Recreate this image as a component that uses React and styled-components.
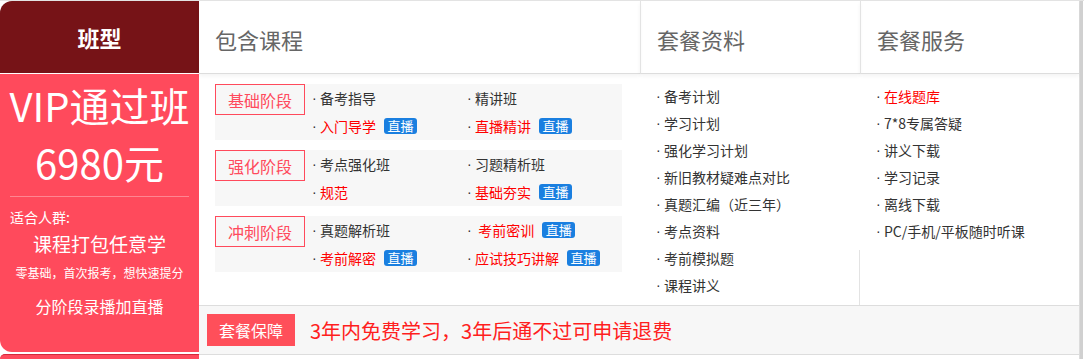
import React from "react";
import styled, { createGlobalStyle } from "styled-components";

const Global = createGlobalStyle`
  body {
    margin: 0;
    background: #fff;
    font-family: "Noto Sans CJK SC", "Microsoft YaHei", sans-serif;
  }
`;

const stages = [
  {
    name: "基础阶段",
    items: [
      { text: "备考指导" },
      { text: "精讲班" },
      { text: "入门导学", red: true, live: true },
      { text: "直播精讲", red: true, live: true },
    ],
  },
  {
    name: "强化阶段",
    items: [
      { text: "考点强化班" },
      { text: "习题精析班" },
      { text: "规范", red: true },
      { text: "基础夯实", red: true, live: true },
    ],
  },
  {
    name: "冲刺阶段",
    items: [
      { text: "真题解析班" },
      { text: " 考前密训", red: true, live: true },
      { text: "考前解密", red: true, live: true },
      { text: "应试技巧讲解", red: true, live: true },
    ],
  },
];

const materials = [
  "备考计划",
  "学习计划",
  "强化学习计划",
  "新旧教材疑难点对比",
  "真题汇编（近三年）",
  "考点资料",
  "考前模拟题",
  "课程讲义",
];

const services = [
  { text: "在线题库", red: true },
  { text: "7*8专属答疑" },
  { text: "讲义下载" },
  { text: "学习记录" },
  { text: "离线下载" },
  { text: "PC/手机/平板随时听课" },
];

export default function App() {
  return (
    <Page>
      <Global />
      <LeftCol>
        <LeftHead>班型</LeftHead>
        <LeftBody>
          <Title>VIP通过班</Title>
          <Title>6980元</Title>
          <Rule />
          <Label>适合人群:</Label>
          <Slogan>课程打包任意学</Slogan>
          <Small>零基础，首次报考，想快速提分</Small>
          <Mode>分阶段录播加直播</Mode>
        </LeftBody>
        <NextRow />
      </LeftCol>
      <Main>
        <HeadCell>包含课程</HeadCell>
        <HeadCell divided>套餐资料</HeadCell>
        <HeadCell divided>套餐服务</HeadCell>

        <Stages>
          {stages.map((s) => (
            <StageBlock key={s.name}>
              <StageTag>{s.name}</StageTag>
              <Items>
                {s.items.map((it) => (
                  <Item key={it.text} red={it.red}>
                    <Dot>·</Dot>
                    {it.text}
                    {it.live && <Live>直播</Live>}
                  </Item>
                ))}
              </Items>
            </StageBlock>
          ))}
        </Stages>

        <ListCol split>
          {materials.map((m) => (
            <ListItem key={m}>
              <Dot>·</Dot>
              {m}
            </ListItem>
          ))}
        </ListCol>
        <ListCol>
          {services.map((s) => (
            <ListItem key={s.text} red={s.red}>
              <Dot>·</Dot>
              {s.text}
            </ListItem>
          ))}
        </ListCol>

        <Footer>
          <Guarantee>套餐保障</Guarantee>
          <Promise>3年内免费学习，3年后通不过可申请退费</Promise>
        </Footer>
      </Main>
      <Edge />
    </Page>
  );
}

const Page = styled.div`
  display: flex;
  width: 1084px;
  height: 359px;
  border-top: 1px solid #e3e3e3;
  box-sizing: border-box;
  overflow: hidden;
`;

const LeftCol = styled.div`
  width: 199px;
  flex: none;
  display: flex;
  flex-direction: column;
`;

const LeftHead = styled.div`
  height: 72px;
  background: #761317;
  border-top-left-radius: 12px;
  color: #fff;
  font-size: 22px;
  font-weight: bold;
  display: flex;
  align-items: center;
  justify-content: center;
`;

const LeftBody = styled.div`
  margin-top: 1px;
  height: 278px;
  background: #ff4a5c;
  border-bottom-left-radius: 12px;
  padding: 3px 10px 0;
  box-sizing: border-box;
  color: #fff;
  display: flex;
  flex-direction: column;
  align-items: center;
`;

const Title = styled.div`
  font-size: 40px;
  line-height: 57px;
  white-space: nowrap;
`;

const Rule = styled.div`
  align-self: stretch;
  height: 1px;
  margin-top: 5px;
  background: #ff8591;
`;

const Label = styled.div`
  align-self: flex-start;
  margin-top: 10px;
  font-size: 14px;
  line-height: 20px;
`;

const Slogan = styled.div`
  margin-top: 2px;
  font-size: 19px;
  line-height: 30px;
`;

const Small = styled.div`
  margin-top: 4px;
  font-size: 12px;
  line-height: 20px;
  white-space: nowrap;
`;

const Mode = styled.div`
  margin-top: 11px;
  font-size: 16px;
  line-height: 24px;
`;

const NextRow = styled.div`
  flex: 1;
  margin-top: 2px;
  background: #ff4a5c;
  border-top: 1px solid #d42a3b;
  border-top-left-radius: 10px;
`;

const Main = styled.div`
  width: 881px;
  flex: none;
  display: grid;
  grid-template-columns: 441px 220px 1fr;
  grid-template-rows: 73px 231px 50px;
  border-right: 1px solid #dcdcdc;
  box-sizing: border-box;
`;

const HeadCell = styled.div`
  display: flex;
  align-items: center;
  padding: 4px 0 0 16px;
  font-size: 22px;
  color: #666;
  border-bottom: 1px solid #ddd;
  border-left: ${(p) => (p.divided ? "1px solid #e3e3e3" : "none")};
  box-shadow: 0 2px 4px rgba(0, 0, 0, 0.05);
`;

const Stages = styled.div`
  padding: 10px 18px 0 16px;
  display: flex;
  flex-direction: column;
  gap: 10px;
`;

const StageBlock = styled.div`
  display: flex;
  height: 56px;
  background: #f7f7f7;
`;

const StageTag = styled.div`
  width: 90px;
  height: 31px;
  box-sizing: border-box;
  border: 1px solid #ff4a5c;
  color: #ff4a5c;
  font-size: 16px;
  display: flex;
  align-items: center;
  justify-content: center;
  flex: none;
`;

const Items = styled.div`
  margin-left: 7px;
  display: grid;
  grid-template-columns: 155px 1fr;
  grid-auto-rows: 28px;
  flex: 1;
`;

const Item = styled.div`
  display: flex;
  align-items: center;
  font-size: 14px;
  color: ${(p) => (p.red ? "#ff0000" : "#333")};
  white-space: pre;
`;

const Dot = styled.span`
  display: inline-block;
  flex: none;
  width: 8px;
  font-family: "Liberation Sans", Arial, sans-serif;
  color: #333;
`;

const Live = styled.span`
  margin-left: 8px;
  width: 33px;
  height: 16px;
  line-height: 16px;
  border-radius: 3px;
  background: #1a7fe0;
  color: #fff;
  font-size: 13px;
  text-align: center;
`;

const ListCol = styled.div`
  padding: 8px 0 0 16px;
  background: ${(p) =>
    p.split
      ? "linear-gradient(#e3e3e3, #e3e3e3) right bottom / 1px 55px no-repeat"
      : "none"};
`;

const ListItem = styled.div`
  height: 27px;
  display: flex;
  align-items: center;
  font-size: 14px;
  color: ${(p) => (p.red ? "#ff0000" : "#333")};
  white-space: nowrap;
`;

const Footer = styled.div`
  grid-column: 1 / -1;
  display: flex;
  align-items: center;
  padding-left: 8px;
  background: #f7f7f7;
  border-top: 1px solid #ddd;
  border-bottom: 1px solid #ddd;
`;

const Guarantee = styled.div`
  width: 88px;
  height: 32px;
  background: #ff4f5a;
  color: #fff;
  font-size: 16px;
  display: flex;
  align-items: center;
  justify-content: center;
`;

const Promise = styled.div`
  margin-left: 15px;
  font-size: 20px;
  color: #ff1e1e;
`;

const Edge = styled.div`
  width: 3px;
  flex: none;
  background: #d0d0d0;
`;
